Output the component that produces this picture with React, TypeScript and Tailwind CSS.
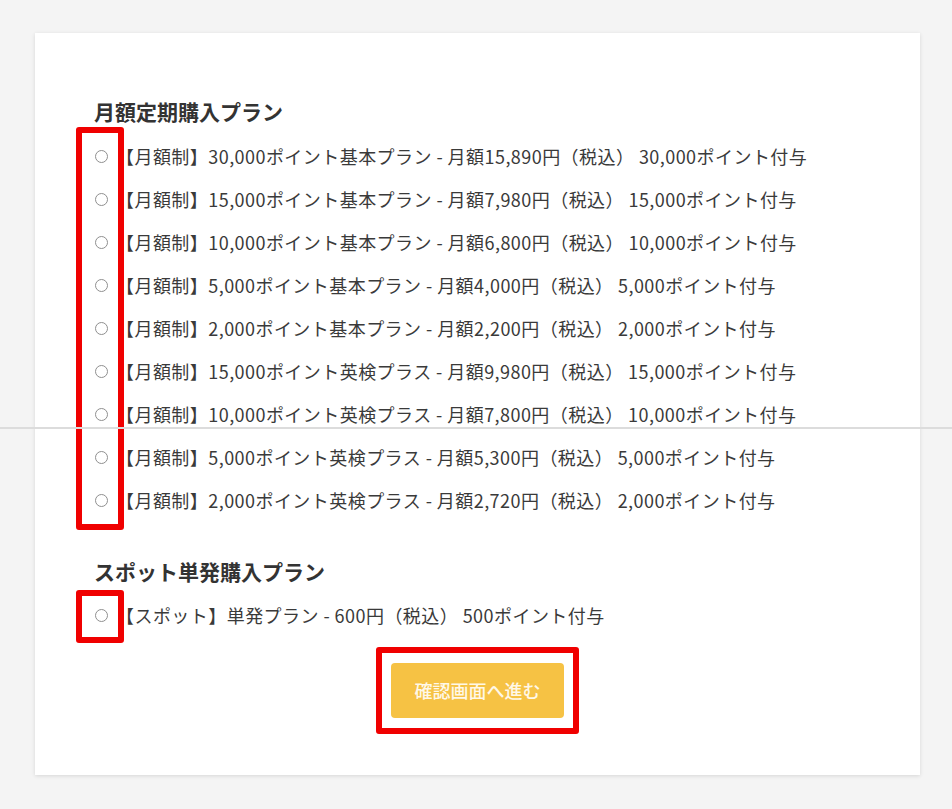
import React from "react";

const monthly = [
  "【月額制】30,000ポイント基本プラン - 月額15,890円（税込） 30,000ポイント付与",
  "【月額制】15,000ポイント基本プラン - 月額7,980円（税込） 15,000ポイント付与",
  "【月額制】10,000ポイント基本プラン - 月額6,800円（税込） 10,000ポイント付与",
  "【月額制】5,000ポイント基本プラン - 月額4,000円（税込） 5,000ポイント付与",
  "【月額制】2,000ポイント基本プラン - 月額2,200円（税込） 2,000ポイント付与",
  "【月額制】15,000ポイント英検プラス - 月額9,980円（税込） 15,000ポイント付与",
  "【月額制】10,000ポイント英検プラス - 月額7,800円（税込） 10,000ポイント付与",
  "【月額制】5,000ポイント英検プラス - 月額5,300円（税込） 5,000ポイント付与",
  "【月額制】2,000ポイント英検プラス - 月額2,720円（税込） 2,000ポイント付与",
];

function Row({ label }: { label: string }) {
  return (
    <label className="flex h-[43px] items-center">
      <span className="ml-[1px] h-[13px] w-[13px] shrink-0 rounded-full border border-[#8f8f8f] bg-white" />
      <span className="ml-[8px] text-[18px] tracking-[0.45px] text-[#3a3a3a] whitespace-nowrap">{label}</span>
    </label>
  );
}

export default function App() {
  return (
    <div
      className="relative h-[809px] w-full overflow-hidden bg-[#f4f4f4] pt-[33px] pl-[35px]"
      style={{ fontFamily: '"Noto Sans CJK JP", "Noto Sans", sans-serif' }}
    >
      <div className="w-[885px] bg-white pt-[65px] pb-[41px] pl-[59px] shadow-[0_1px_4px_rgba(0,0,0,0.12)]">
        <h2 className="h-[27px] text-[21px] leading-[27px] font-bold text-[#333]">月額定期購入プラン</h2>
        <div className="relative mt-[10px] flex flex-col">
          {monthly.map((m) => (
            <Row key={m} label={m} />
          ))}
          <div className="absolute -left-[18px] -top-[8px] h-[403px] w-[48px] rounded-[3px] border-[6px] border-[#f00000]" />
        </div>
        <h2 className="mt-[36px] h-[27px] text-[21px] leading-[27px] font-bold text-[#333]">スポット単発購入プラン</h2>
        <div className="relative mt-[9px]">
          <Row label="【スポット】単発プラン - 600円（税込） 500ポイント付与" />
          <div className="absolute -left-[18px] -top-[4px] h-[53px] w-[48px] rounded-[3px] border-[6px] border-[#f00000]" />
        </div>
        <div className="mt-[10px] flex justify-center pr-[59px]">
          <div className="rounded-[3px] border-[6px] border-[#f00000] px-[9px] py-[10px]">
            <button className="h-[55px] w-[173px] rounded-[4px] bg-[#f6c244] text-[18px] font-medium text-[#fff8e8]">
              確認画面へ進む
            </button>
          </div>
        </div>
      </div>

      {/* scan line artefact across the page */}
      <div className="absolute left-0 top-[427px] h-[2px] w-full bg-[#dcdcdc]" />
    </div>
  );
}
